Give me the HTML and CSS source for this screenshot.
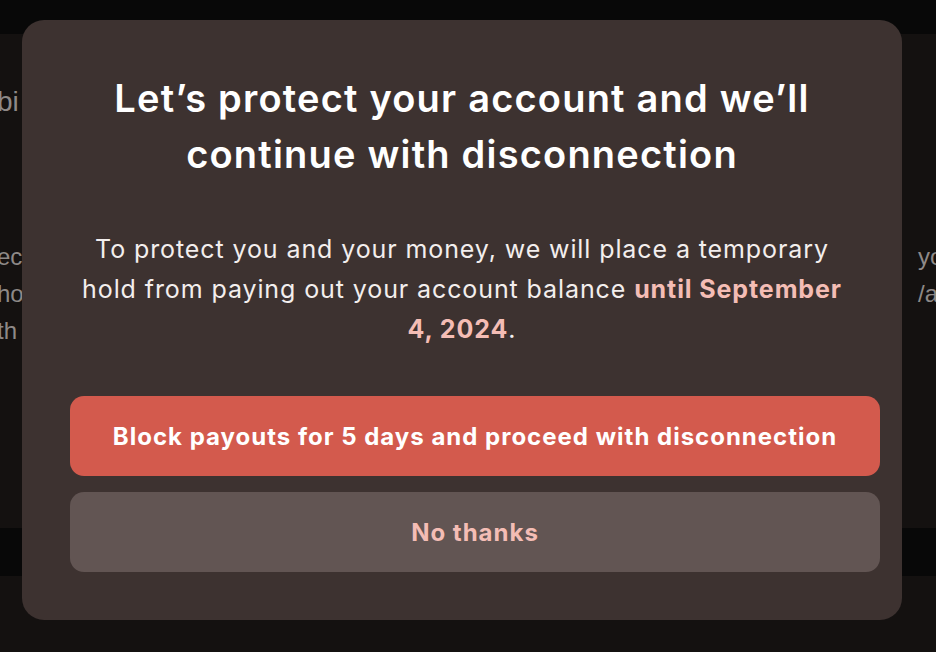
FILE: index.html
```html
<!DOCTYPE html>
<html lang="en">
<head>
<meta charset="utf-8">
<title>Protect your account</title>
<link rel="stylesheet" href="styles.css">
</head>
<body>
<div class="page">
  <div class="topbar"></div>
  <div class="panel">
    <div class="bg-row bg-title"><span class="bg-left">bi</span><span class="bg-right"></span></div>
    <div class="bg-text">
      <div class="bg-row"><span class="bg-left">ec</span><span class="bg-right">you</span></div>
      <div class="bg-row"><span class="bg-left">ho</span><span class="bg-right">/an</span></div>
      <div class="bg-row"><span class="bg-left">th</span><span class="bg-right"></span></div>
    </div>
  </div>
  <div class="band"></div>
  <div class="footer"></div>
</div>

<div class="modal" role="dialog" aria-labelledby="modal-title">
  <h1 id="modal-title" class="modal-title">Let’s protect your account and we’ll continue with disconnection</h1>
  <p class="modal-body">To protect you and your money, we will place a temporary hold from paying out your account balance <strong class="highlight">until September 4, 2024</strong>.</p>
  <div class="actions">
    <button class="btn btn-primary">Block payouts for 5 days and proceed with disconnection</button>
    <button class="btn btn-secondary">No thanks</button>
  </div>
</div>
</body>
</html>
```

FILE: styles.css
```css
* { box-sizing: border-box; }
html, body {
  margin: 0;
  padding: 0;
  width: 936px;
  height: 652px;
  overflow: hidden;
  background: #141110;
  font-family: Inter, "Noto Sans", sans-serif;
}
.page {
  display: flex;
  flex-direction: column;
  height: 652px;
}
.topbar {
  height: 34px;
  background: #080808;
}
.panel {
  height: 494px;
  background: #141110;
  display: flex;
  flex-direction: column;
  color: #8e8987;
  font-family: "Liberation Sans", Arial, sans-serif;
  overflow: hidden;
}
.bg-row {
  display: grid;
  grid-template-columns: 22px 1fr 18px;
  white-space: nowrap;
  font-size: 24px;
  line-height: 37px;
}
.bg-left {
  grid-column: 1;
  text-indent: -3px;
}
.bg-right {
  grid-column: 3;
}
.bg-title {
  margin-top: 48px;
  font-size: 28px;
  line-height: 40px;
}
.bg-text {
  margin-top: 116px;
}
.band {
  height: 48px;
  background: #080808;
}
.footer {
  flex: 1;
  background: #141110;
}

.modal {
  position: absolute;
  left: 22px;
  top: 20px;
  width: 880px;
  height: 600px;
  background: #3d3230;
  border-radius: 22px;
  padding: 50px 48px 48px;
  display: flex;
  flex-direction: column;
  align-items: stretch;
  text-align: center;
}
.modal-title {
  margin: 0;
  color: #ffffff;
  font-size: 38px;
  line-height: 56px;
  font-weight: 600;
  letter-spacing: 1.2px;
}
.modal-body {
  margin: 47px 0 0;
  color: #f3eeed;
  font-size: 25px;
  line-height: 40px;
  font-weight: 400;
  letter-spacing: 0.9px;
}
.highlight {
  color: #f4bdb5;
  font-weight: 700;
}
.actions {
  margin-top: auto;
  margin-right: -26px;
  display: flex;
  flex-direction: column;
  gap: 16px;
}
.btn {
  height: 80px;
  border: none;
  border-radius: 14px;
  font-family: Inter, "Noto Sans", sans-serif;
  font-size: 24px;
  font-weight: 700;
  letter-spacing: 1px;
}
.btn-primary {
  background: #d35a4d;
  color: #ffffff;
}
.btn-secondary {
  background: #625553;
  color: #f4bdb5;
}
```
